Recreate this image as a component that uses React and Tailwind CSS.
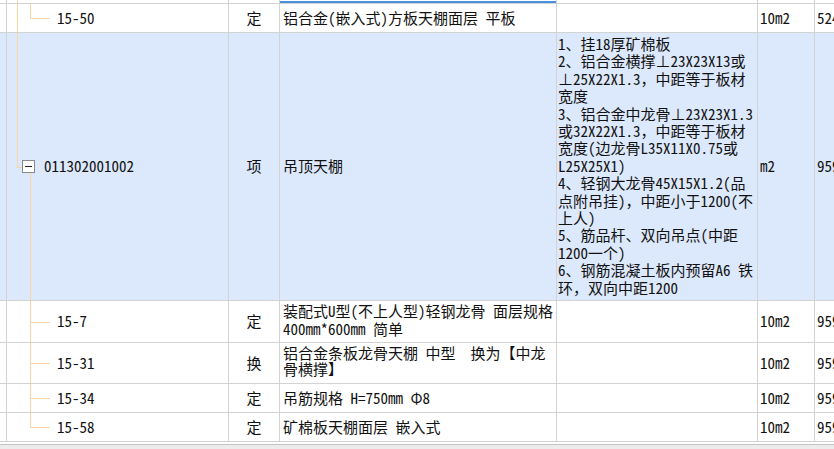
import React from 'react';

const cols = 'grid grid-cols-[7px_222px_51px_277px_201px_57px_60px]';
const cell = 'border-r border-b border-[#d3d3d3]';
const tree = 'absolute bg-[#fcd6a0]';

const features = [
  '1、挂18厚矿棉板',
  '2、铝合金横撑⊥23X23X13或',
  '⊥25X22X1.3，中距等于板材',
  '宽度',
  '3、铝合金中龙骨⊥23X23X1.3',
  '或32X22X1.3，中距等于板材',
  '宽度(边龙骨L35X11X0.75或',
  'L25X25X1)',
  '4、轻钢大龙骨45X15X1.2(品',
  '点附吊挂)，中距小于1200(不',
  '上人)',
  '5、筋品杆、双向吊点(中距',
  '1200一个)',
  '6、钢筋混凝土板内预留A6 铁',
  '环，双向中距1200',
];

const children = [
  { code: '15-7', type: '定', name: ['装配式U型(不上人型)轻钢龙骨 面层规格', '400mm*600mm 简单'], h: 'h-[42px]', lead: 'leading-[18px] pt-[1px]' },
  { code: '15-31', type: '换', name: ['铝合金条板龙骨天棚 中型  换为【中龙', '骨横撑】'], h: 'h-[41px]', lead: 'leading-[16px] pt-[2px]' },
  { code: '15-34', type: '定', name: ['吊筋规格 H=750mm Φ8'], h: 'h-[29px]' },
  { code: '15-58', type: '定', name: ['矿棉板天棚面层 嵌入式'], h: 'h-[29px]', last: true },
];

const Elbow = ({ last }) => (
  <>
    <span className={`${tree} left-[23px] top-0 w-px ${last ? 'h-1/2' : 'h-full'}`} />
    <span className={`${tree} left-[23px] top-1/2 h-px w-[20px]`} />
  </>
);

const ChildRow = ({ row }) => {
  const multi = row.name.length > 1;
  return (
    <div className={`${cols} ${row.h}`}>
      <div className={cell} />
      <div className={`${cell} relative flex items-center pl-[50px]`}>
        <Elbow last={row.last} />
        <span>{row.code}</span>
      </div>
      <div className={`${cell} flex items-center justify-center`}>{row.type}</div>
      <div className={`${cell} pl-[3px] flex ${multi ? `flex-col ${row.lead}` : 'items-center'}`}>
        {row.name.map((line, i) => (
          <div key={i} className="whitespace-pre">{line}</div>
        ))}
      </div>
      <div className={cell} />
      <div className={`${cell} flex items-center pl-[2px]`}>10m2</div>
      <div className={`${cell} flex items-center pl-[2px]`}>959</div>
    </div>
  );
};

export default function App() {
  return (
    <div className="w-[834px] h-[449px] overflow-hidden bg-white text-[15px] text-[#111] font-['Noto_Sans_Mono_CJK_SC','Noto_Sans_CJK_SC',monospace]">
      {/* tail of the row above */}
      <div className={`${cols} h-[4px]`}>
        <div className={cell} />
        <div className={`${cell} relative`}>
          <span className={`${tree} left-[10px] top-0 w-px h-full`} />
        </div>
        <div className={cell} />
        <div className={`${cell} pt-[1px]`}>
          <div className="h-[2px] bg-[#4a8fe0]" />
        </div>
        <div className={cell} />
        <div className={cell} />
        <div className={cell} />
      </div>

      {/* 15-50 */}
      <div className={`${cols} h-[29px]`}>
        <div className={cell} />
        <div className={`${cell} relative flex items-center pl-[50px]`}>
          <span className={`${tree} left-[10px] top-0 w-px h-full`} />
          <span className={`${tree} left-[23px] top-0 w-px h-1/2`} />
          <span className={`${tree} left-[23px] top-1/2 h-px w-[20px]`} />
          <span>15-50</span>
        </div>
        <div className={`${cell} flex items-center justify-center`}>定</div>
        <div className={`${cell} flex items-center pl-[3px] whitespace-nowrap`}>铝合金(嵌入式)方板天棚面层 平板</div>
        <div className={cell} />
        <div className={`${cell} flex items-center pl-[2px]`}>10m2</div>
        <div className={`${cell} flex items-center pl-[2px]`}>524</div>
      </div>

      {/* selected list item */}
      <div className={`${cols} h-[268px] bg-[#dce8fb]`}>
        <div className={cell} />
        <div className={`${cell} relative flex items-center pl-[37px]`}>
          <span className={`${tree} left-[10px] top-0 w-px h-1/2`} />
          <span className={`${tree} left-[10px] top-1/2 h-px w-[5px]`} />
          <span className={`${tree} left-[23px] top-[140px] w-px bottom-0`} />
          <span className="absolute left-[15px] top-[127px] w-[13px] h-[13px] border border-[#8a8a8a] bg-white flex items-center justify-center">
            <span className="w-[7px] h-px bg-[#222]" />
          </span>
          <span>011302001002</span>
        </div>
        <div className={`${cell} flex items-center justify-center`}>项</div>
        <div className={`${cell} flex items-center pl-[3px]`}>吊顶天棚</div>
        <div className={`${cell} pl-[1px] pt-[2px] leading-[17.4px]`}>
          {features.map((line, i) => (
            <div key={i} className="whitespace-nowrap">{line}</div>
          ))}
        </div>
        <div className={`${cell} flex items-center pl-[2px]`}>m2</div>
        <div className={`${cell} flex items-center pl-[2px]`}>959</div>
      </div>

      {children.map((row) => (
        <ChildRow key={row.code} row={row} />
      ))}

      <div className="h-[2px]" />
      <div className="h-[6px] border-t border-[#c4c4c4] bg-[#ececec]" />
    </div>
  );
}
